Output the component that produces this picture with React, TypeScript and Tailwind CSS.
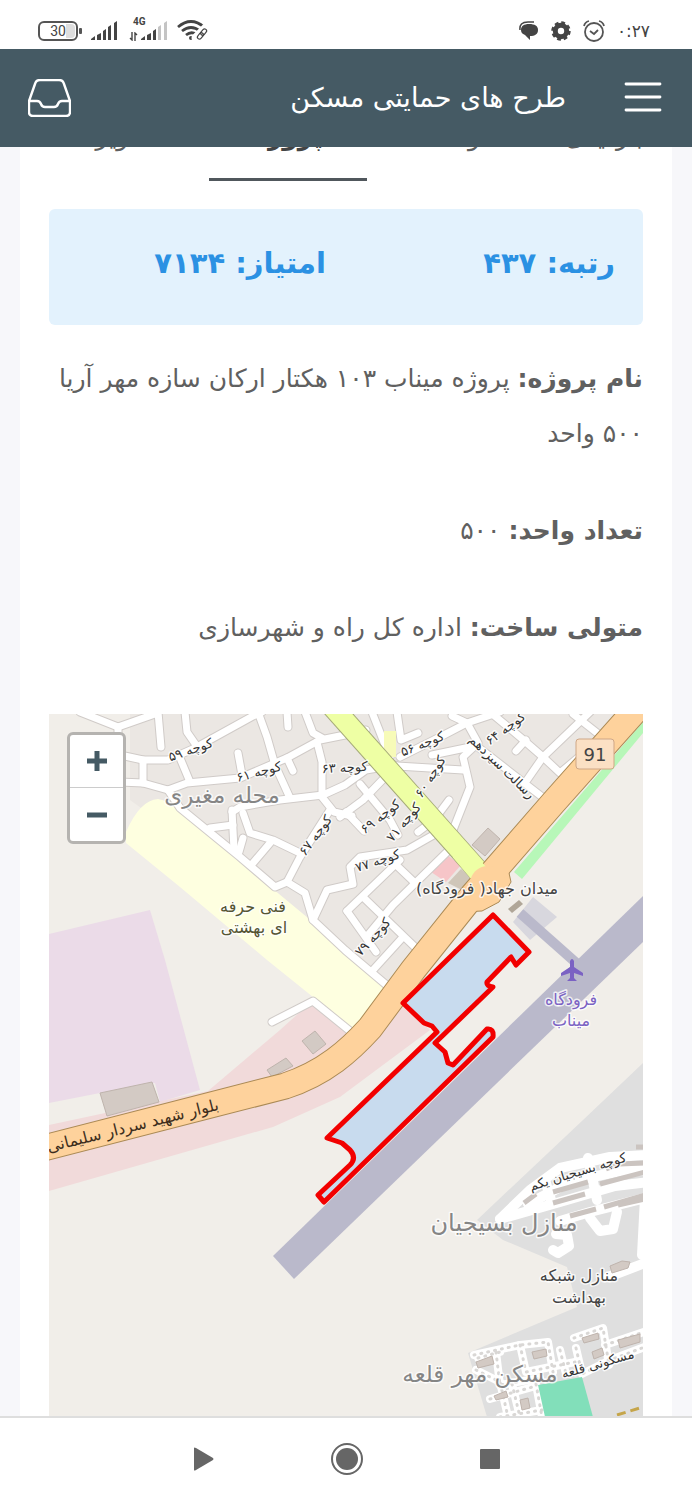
import React from "react";

const facts = [
  { label: "نام پروژه:", value: "پروژه میناب ۱۰۳ هکتار ارکان سازه مهر آریا ۵۰۰ واحد" },
  { label: "تعداد واحد:", value: "۵۰۰" },
  { label: "متولی ساخت:", value: "اداره کل راه و شهرسازی" },
];

const tabs = [
  { name: "بازدیدی", active: false },
  { name: "واحدها", active: false },
  { name: "پروژه", active: true },
  { name: "تصاویر", active: false },
];

const lanes = [
  "M80 712L118 727L155 714", "M118 727V740", "M158 712L161 747",
  "M120 755L143 760L168 760L195 748L253 716L262 712", "M143 760V783",
  "M120 782L143 783L168 790L187 783L240 778L287 758L320 740L345 735L366 730",
  "M185 712L187 732L196 745", "M180 758L190 782", "M258 712L267 737L275 765L290 798", "M238 753L242 775",
  "M287 712L288 727", "M305 712L313 733L322 738", "M317 742L322 762V797L334 812L352 816",
  "M287 758L293 771", "M168 790L180 808L240 857L275 887L287 882L305 893L313 920L345 950L390 988",
  "M232 812L240 807L280 800L323 795L345 785L366 770L395 765", "M232 810L234 850", "M210 828L233 825",
  "M243 813L250 833L273 840L300 853", "M270 843L253 863", "M287 882L300 857L330 810", "M243 838L239 852",
  "M313 920L327 890L353 884L350 867L360 857L407 850L437 833L452 828", "M372 712L383 740L390 757", "M397 712L401 740L418 733",
  "M400 757L440 737L467 723L500 712", "M397 766L463 770", "M452 716L467 723L478 743L463 757L470 787L453 830",
  "M432 755L475 746", "M478 747L550 803", "M490 712L520 737L543 757L560 773L585 752",
  "M527 780L543 757L590 712", "M573 714L601 736", "M516 751L526 740", "M340 817L363 800L390 772",
  "M360 784L390 820L398 835", "M346 812L364 831", "M418 832L434 820L449 800", "M448 851L393 905L368 935",
  "M347 911L400 860", "M347 911L376 952", "M393 862L415 883", "M363 897L420 952", "M373 970L403 937",
];

const homesLanes = [
  "M500 1219L530 1190L560 1168L610 1157L650 1155", "M500 1219L560 1202L615 1186L650 1182",
  "M528 1204L570 1182L620 1171L650 1170", "M545 1180L551 1200", "M588 1158L597 1200",
  "M560 1221L590 1212L645 1198L642 1255", "M590 1218L600 1231L613 1229L617 1212",
  "M553 1250L558 1253L569 1246L567 1235L556 1234", "M608 1277L645 1263",
];

const homeRows = [
  "M524 1203L536 1194", "M553 1192L588 1182", "M600 1184L645 1172", "M553 1203L585 1194", "M570 1216L596 1209",
  "M604 1207L645 1195", "M606 1169L620 1164L645 1163", "M618 1205L645 1199", "M636 1147H645",
];

const minis = [
  "M474 1355L520 1345L548 1342L553 1372", "M476 1370L500 1382L508 1417", "M496 1352L500 1385L540 1378",
  "M520 1345L526 1372L575 1362", "M574 1338L603 1328L609 1365", "M576 1348L582 1374L610 1360L650 1345",
  "M605 1345L650 1330", "M490 1399L536 1386", "M512 1384L520 1417", "M536 1384L542 1417", "M500 1417L542 1410",
  "M478 1358L500 1352", "M560 1350L566 1374",
];

const buildings = [
  "M100 1093L152 1082L159 1102L107 1116Z", "M267 1070L286 1058L293 1066L272 1077Z", "M302 1041L315 1031L326 1044L313 1054Z",
  "M472 845L488 828L500 839L485 856Z",
  "M476 1362L492 1356L494 1364L478 1368Z", "M582 1338L598 1333L599 1339L584 1343Z", "M520 1400L528 1398L530 1408L522 1410Z",
  "M494 1396L506 1391L508 1397L496 1400Z", "M532 1352L546 1349L547 1356L534 1359Z", "M592 1352L602 1348L604 1355L594 1359Z",
  "M618 1340L640 1334V1342L620 1348Z", "M610 1266L622 1261L630 1262L628 1268L612 1273Z",
];

type Label = { x: number; y: number; r?: number; s: number; c: string; t: string };
const labels: Label[] = [
  { x: 192, y: 754, r: -19, s: 13, c: "#333", t: "کوچه ۵۹" },
  { x: 260, y: 776, r: -15, s: 13, c: "#333", t: "کوچه ۶۱" },
  { x: 345, y: 772, r: -3, s: 13, c: "#333", t: "کوچه ۶۳" },
  { x: 319, y: 838, r: -53, s: 13, c: "#333", t: "کوچه ۶۷" },
  { x: 424, y: 748, r: -22, s: 13, c: "#333", t: "کوچه ۵۶" },
  { x: 508, y: 732, r: -36, s: 13, c: "#333", t: "کوچه ۶۴" },
  { x: 434, y: 779, r: -58, s: 13, c: "#333", t: "کوچه ۶۰" },
  { x: 383, y: 820, r: -38, s: 13, c: "#333", t: "کوچه ۶۹" },
  { x: 407, y: 825, r: -50, s: 13, c: "#333", t: "کوچه ۷۱" },
  { x: 379, y: 865, r: -18, s: 13, c: "#333", t: "کوچه ۷۷" },
  { x: 376, y: 940, r: -48, s: 13, c: "#333", t: "کوچه ۷۹" },
  { x: 499, y: 770, r: 44, s: 13, c: "#333", t: "رسالت سیزدهم" },
  { x: 222, y: 803, s: 23, c: "#858585", t: "محله مغیری" },
  { x: 253, y: 912, s: 16, c: "#555533", t: "فنی حرفه" },
  { x: 254, y: 933, s: 16, c: "#555533", t: "ای بهشتی" },
  { x: 487, y: 894, s: 16, c: "#444", t: "میدان جهاد( فرودگاه)" },
  { x: 571, y: 1005, s: 16, c: "#7b62c3", t: "فرودگاه" },
  { x: 571, y: 1026, s: 16, c: "#7b62c3", t: "میناب" },
  { x: 579, y: 1176, r: -17, s: 13, c: "#333", t: "کوچه بسیجیان یکم" },
  { x: 504, y: 1231, s: 24, c: "#858585", t: "منازل بسیجیان" },
  { x: 579, y: 1281, s: 16, c: "#444", t: "منازل شبکه" },
  { x: 579, y: 1303, s: 16, c: "#444", t: "بهداشت" },
  { x: 480, y: 1382, s: 23, c: "#858585", t: "مسکن مهر قلعه" },
  { x: 599, y: 1368, r: -16, s: 13, c: "#333", t: "مسکونی قلعه" },
];

function CityMap() {
  return (
    <svg viewBox="49 714 594 703" className="block w-full" role="img" aria-label="نقشه پروژه" fontFamily="DejaVu Sans, sans-serif">
      <rect x="49" y="714" width="594" height="703" fill="#f1eee9" />
      <path d="M80 714H640L480 880L390 988L130 800V714Z" fill="#ebe7e3" />
      <path d="M49 934L150 910L165 960L200 1090L160 1102L155 1083L100 1093L49 1103Z" fill="#ebdbe8" />
      <path d="M49 1125L208 1091L280 1030L310 1003L350 1033L403 1005L430 1030L340 1097L273 1127L49 1191Z" fill="#f1dada" />
      <path d="M126 832Q140 800 158 799Q168 800 180 812L395 990L350 1030L313 997L267 960L180 887L126 843Z" fill="#feffe0" />
      <path d="M643 1063L583 1120L477 1220L503 1240L567 1267L577 1307L468 1353L487 1417H643Z" fill="#dfdfdf" />
      <path d="M643 722V733L522 879L514 872Z" fill="#b7f7b8" />
      <path d="M431 872L447 855L461 865L446 882Z" fill="#f6c5c8" />
      <path d="M448 883L461 869L472 878L462 890Z" fill="#cfc6b9" />
      <path d="M533 897L557 917L530 940L513 922Z" fill="#d8d7de" />
      <path d="M520 913L582 968" stroke="#bab9cb" strokeWidth="10" />
      <path d="M273 1256L294 1279L643 942V896Z" fill="#bab9cb" />
      <path d="M508 909L519 900L523 904L512 913Z" fill="#b0a698" />
      <g fill="none" strokeLinejoin="round" strokeLinecap="round">
        {lanes.map((d) => <path key={d} d={d} stroke="#d0cbc8" strokeWidth="9" />)}
        <path d="M272 1022L313 1001L350 1031" stroke="#d0cbc8" strokeWidth="9" />
        {lanes.map((d) => <path key={d} d={d} stroke="#fff" strokeWidth="7" />)}
        <path d="M272 1022L313 1001L350 1031" stroke="#fff" strokeWidth="7" />
        <path d="M390 731V757" stroke="#f7fbb8" strokeWidth="12" strokeLinecap="butt" />
        {homesLanes.map((d) => <path key={d} d={d} stroke="#fff" strokeWidth="10" />)}
        {homeRows.map((d) => <path key={d} d={d} stroke="#cbc4c0" strokeWidth="5" strokeLinecap="butt" />)}
        {minis.map((d) => <path key={d} d={d} stroke="#fff" strokeWidth="8" />)}
        {minis.map((d) => <path key={d} d={d} stroke="#d9d7d5" strokeWidth="3" strokeDasharray="1 6" />)}
      </g>
      {buildings.map((d) => <path key={d} d={d} fill="#d3cac4" stroke="#bfb4ad" />)}
      <path d="M538 1385L582 1377L593 1417H545Z" fill="#82dfba" />
      <path d="M617 1415L643 1407" stroke="#c5a54a" strokeWidth="3" strokeDasharray="9 5" />
      <path d="M330 704L482 875" stroke="#a5aa78" strokeWidth="22" />
      <path d="M330 704L484 877" stroke="#eeffa4" strokeWidth="20" />
      <g fill="none">
        <path d="M40 1149L207 1106L285 1086C325 1073 350 1050 370 1028L413 970L473 895L553 803L642 703" stroke="#ab8a55" strokeWidth="27" />
        <path d="M470 868L488 868L505 855L511 882L499 902L482 911L461 912L456 899L474 880Z" fill="#fed29c" stroke="#ab8a55" />
        <path d="M40 1149L207 1106L285 1086C325 1073 350 1050 370 1028L413 970L473 895L553 803L642 703" stroke="#fed29c" strokeWidth="25" />
        <path d="M460 851L482 877" stroke="#eeffa4" strokeWidth="19" />
        <circle cx="488" cy="884" r="18" fill="#fed29c" />
      </g>
      <path d="M493 915L529 952L516 965L511 957L487 982Q486 986 493 987L435 1043L445 1052L448 1063L453 1065L487 1029Q494 1028 493 1037L324 1202L318 1195L350 1165Q357 1158 350 1150L342 1143L327 1138L437 1032L432 1026L424 1023L403 1003Z" fill="#c3d8ee" fillOpacity=".9" stroke="#f20000" strokeWidth="5" strokeLinejoin="round" />
      <path d="M570 961Q572 957 574 961V967L583 973V976L574 973V978L577 981H567L570 978V973L561 976V973L570 967Z" fill="#7b62c3" />
      <rect x="576" y="739" width="38" height="30" rx="3" fill="#fbe0c4" stroke="#cfa786" />
      <text x="595" y="761" fontSize="18" textAnchor="middle" fill="#444">91</text>
      {labels.map((l) => (
        <text key={l.t} x={l.x} y={l.y} transform={l.r ? `rotate(${l.r} ${l.x} ${l.y})` : undefined} fontSize={l.s} fill={l.c} textAnchor="middle" direction="rtl" stroke="#fff" strokeOpacity=".75" strokeWidth="3" strokeLinejoin="round" paintOrder="stroke">
          {l.t}
        </text>
      ))}
      <text x="134" y="1131" transform="rotate(-14 134 1131)" fontSize="16" fill="#3d2e1c" textAnchor="middle" direction="rtl">بلوار شهید سردار سلیمانی</text>
    </svg>
  );
}

function Bars({ faded = false }: { faded?: boolean }) {
  return (
    <svg width="27" height="20" viewBox="0 0 27 20" fill="#444" aria-hidden="true">
      <path d="M0 19V18L4 15V19ZM6 19V14L10 12V19ZM12 19V10L15 8V19Z" />
      <path d="M17 19V6L20 4V19ZM23 19V2L26 0V19Z" fill={faded ? "#c4c4c4" : "#444"} />
    </svg>
  );
}

function StatusBar() {
  return (
    <div className="flex h-[49px] shrink-0 items-center justify-between bg-white pt-3 pr-[42px] pl-[38px] text-[#444]">
      <div className="flex items-center">
        <svg width="44" height="20" viewBox="0 0 44 20" aria-label="30">
          <rect x="1" y="1" width="38" height="18" rx="5" fill="#fff" stroke="#555" strokeWidth="2" />
          <path d="M28 3H33Q37 3 37 7V13Q37 17 33 17H28Z" fill="#dedede" />
          <rect x="41" y="7" width="3" height="6" rx="1" fill="#555" />
          <text x="20" y="15" textAnchor="middle" fontFamily="Roboto, sans-serif" fontSize="14" fill="#444">30</text>
        </svg>
        <div className="ml-[9px]"><Bars /></div>
        <div className="relative ml-[23px]">
          <Bars faded />
          <span className="absolute -top-1 -left-2 font-[Roboto] text-[10px] leading-[10px] font-bold">4G</span>
          <svg className="absolute bottom-0 -left-3" width="9" height="9" viewBox="0 0 9 9" fill="none" stroke="#444" strokeWidth="1.4" aria-hidden="true"><path d="M3 0V8L1 6M6 9V1L8 3" /></svg>
        </div>
        <svg className="ml-[9px]" width="32" height="21" viewBox="0 0 32 21" fill="none" stroke="#444" strokeWidth="2.8" aria-hidden="true">
          <path d="M1 7Q14 -4 27 7M5 11Q14 4 23 11M9 15Q14 11 19 14" />
          <circle cx="14" cy="18" r="2" fill="#444" stroke="none" />
          <path d="M19 18L29 8" stroke="#fff" strokeWidth="9" strokeLinecap="round" />
          <g transform="rotate(-50 25 14)" strokeWidth="1.2"><rect x="19" y="12" width="7" height="4" rx="2" /><rect x="24" y="12" width="7" height="4" rx="2" /></g>
        </svg>
      </div>
      <div className="flex items-center">
        <svg width="20" height="20" viewBox="0 0 20 20" aria-hidden="true">
          <path d="M1 9Q0 1 9 1H15" stroke="#444" strokeWidth="1.5" fill="none" />
          <path d="M10 3C16 3 19 5 19 9C19 13 16 15 11 15L11 19L6 14C3 13 2 11 2 9C2 5 5 3 10 3Z" fill="#444" />
        </svg>
        <svg className="ml-3" width="20" height="20" viewBox="0 0 20 20" aria-hidden="true">
          <circle cx="10" cy="10" r="5.7" fill="none" stroke="#444" strokeWidth="5" />
          <circle cx="10" cy="10" r="8.2" fill="none" stroke="#444" strokeWidth="3" strokeDasharray="3.7 2.74" />
        </svg>
        <svg className="ml-3" width="22" height="22" viewBox="0 0 22 22" fill="none" stroke="#555" strokeWidth="1.8" aria-hidden="true">
          <circle cx="11" cy="12" r="9" /><path d="M7 11L11 14L15 10M1 6Q2 2 6 1M16 1Q20 2 21 6" />
        </svg>
        <time dir="ltr" className="ml-3 text-[17px] leading-5">۰:۲۷</time>
      </div>
    </div>
  );
}

export default function App() {
  return (
    <div className="flex h-screen flex-col overflow-hidden bg-[#f7f7fa] font-['DejaVu_Sans',sans-serif]">
      <StatusBar />
      <header className="flex h-[98px] shrink-0 items-center bg-[#455a64] px-7 text-white">
        <button aria-label="صندوق ورودی" className="shrink-0">
          <svg width="43" height="38" viewBox="0 0 43 38" fill="none" stroke="#fff" strokeWidth="2.4" strokeLinejoin="round" strokeLinecap="round">
            <path d="M1 22L7 5Q8 1 12 1H31Q35 1 36 5L42 22V33Q42 37 38 37H5Q1 37 1 33Z" />
            <path d="M1 22H9Q12 22 13 25Q14 28 17 28H26Q29 28 30 25Q31 22 34 22H42" />
          </svg>
        </button>
        <h1 dir="rtl" className="flex-1 pr-[58px] text-[27px] leading-9">طرح های حمایتی مسکن</h1>
        <button aria-label="فهرست" className="shrink-0">
          <svg width="40" height="32" viewBox="0 0 40 32" stroke="#fff" strokeWidth="2.8" strokeLinecap="round"><path d="M2 2H36M2 15H36M2 28H36" /></svg>
        </button>
      </header>
      <main dir="rtl" className="mx-5 min-h-0 flex-1 overflow-hidden bg-white px-[29px] text-[#606060]">
        <nav className="-mx-10 -mt-7 flex text-[25px] leading-9">
          {tabs.map((tab) => (
            <button key={tab.name} className={tab.active ? "w-[158px] shrink-0 border-b-[3px] border-[#50575c] pb-[23px] font-bold text-[#444]" : "w-[158px] shrink-0 border-b-[3px] border-transparent pb-[23px]"}>
              {tab.name}
            </button>
          ))}
        </nav>
        <section className="mt-7 grid h-[116px] grid-cols-2 rounded-md bg-[#e3f2fd] px-7 pt-8 text-[29px] leading-[44px] font-bold text-[#2b91e3]">
          <p>رتبه: ۴۳۷</p>
          <p className="pr-5">امتیاز: ۷۱۳۴</p>
        </section>
        <dl className="mt-[26px] flex flex-col gap-[42px] text-[25px] leading-[55px]">
          {facts.map((fact) => (
            <div key={fact.label}>
              <dt className="inline font-bold">{fact.label}</dt> <dd className="inline">{fact.value}</dd>
            </div>
          ))}
        </dl>
        <div className="relative mt-[59px]">
          <CityMap />
          <div className="absolute top-[18px] left-[18px] flex flex-col rounded-md border-[3px] border-[#b5b3b0] bg-white">
            <button aria-label="بزرگ‌نمایی" className="flex h-[53px] w-[53px] items-center justify-center border-b border-[#ccc]">
              <svg width="20" height="20" viewBox="0 0 20 20" stroke="#455a64" strokeWidth="5"><path d="M0 10H20M10 0V20" /></svg>
            </button>
            <button aria-label="کوچک‌نمایی" className="flex h-[53px] w-[53px] items-center justify-center">
              <svg width="20" height="20" viewBox="0 0 20 20" stroke="#455a64" strokeWidth="5"><path d="M0 10H20" /></svg>
            </button>
          </div>
        </div>
      </main>
      <nav className="flex h-[84px] shrink-0 items-center justify-center gap-[111px] border-t-2 border-[#dedede] bg-white pl-0.5">
        <button aria-label="Back"><svg width="32" height="32" viewBox="0 0 32 32" fill="#666"><path d="M6 5Q6 4 8 5L25 15Q26 16 25 17L8 27Q6 28 6 27Z" /></svg></button>
        <button aria-label="Home"><svg width="32" height="32" viewBox="0 0 32 32" fill="#666"><circle cx="16" cy="16" r="15" fill="none" stroke="#666" strokeWidth="2" /><circle cx="16" cy="16" r="11" /></svg></button>
        <button aria-label="Recent apps"><svg width="32" height="32" viewBox="0 0 32 32" fill="#666"><rect x="6" y="6" width="20" height="20" rx="1" /></svg></button>
      </nav>
    </div>
  );
}
